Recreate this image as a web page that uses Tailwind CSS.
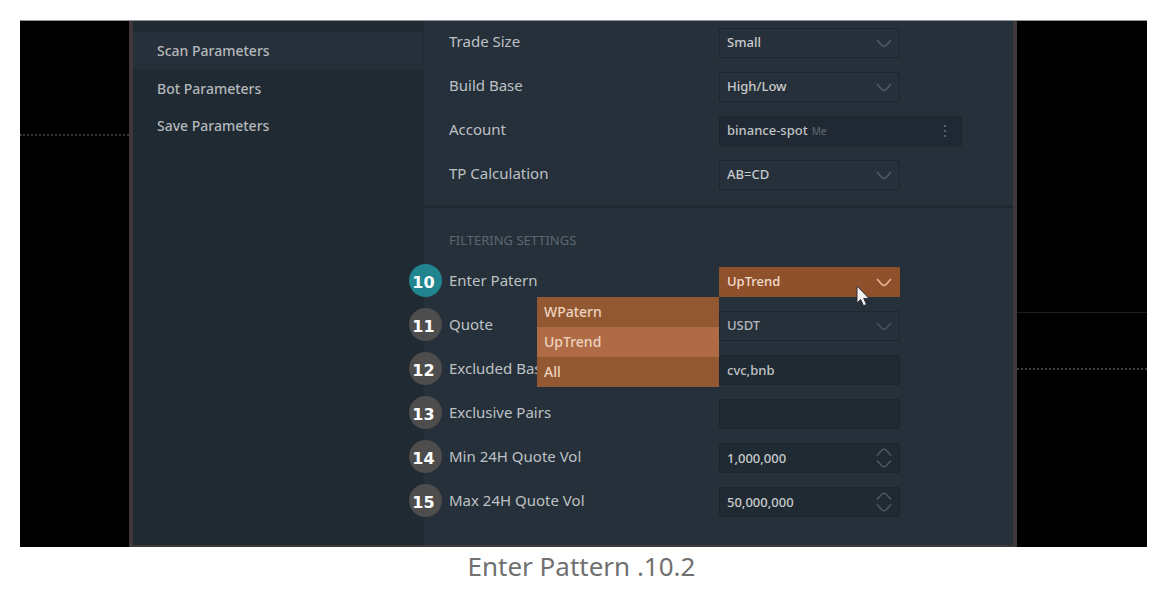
<!DOCTYPE html>
<html lang="en">
<head>
<meta charset="utf-8">
<title>Enter Pattern</title>
<script src="https://cdn.jsdelivr.net/npm/@tailwindcss/browser@4"></script>
</head>
<body class="bg-white font-['Noto_Sans',sans-serif] text-[13px] font-medium text-[#b4b8bb]">
<svg class="hidden" aria-hidden="true">
  <symbol id="chevron" viewBox="0 0 16 9"><path d="M1 1 L5.5 6 Q8 8.6 10.5 6 L15 1" fill="none" stroke="currentColor" stroke-width="1.7"/></symbol>
  <symbol id="spin" viewBox="0 0 16 20"><path d="M1 7.5 L5.5 2.5 Q8 0 10.5 2.5 L15 7.5 M1 12.5 L5.5 17.5 Q8 20 10.5 17.5 L15 12.5" fill="none" stroke="currentColor" stroke-width="1.5"/></symbol>
</svg>
<figure class="mt-5 mr-[22px] ml-5">
  <div class="flex border-t border-[#8d9599] bg-black">
    <div class="w-[109px] shrink-0 pt-[113px]"><div class="border-t-2 border-dotted border-[#343434]"></div></div>

    <div class="flex min-w-0 flex-1 border-x-4 border-b-2 border-[#40383a] bg-[#202a33]">
      <nav class="w-[290px] shrink-0 pt-[11px] text-sm" aria-label="Sections">
        <a href="#scan" class="flex h-[38px] items-center bg-[#26303a] pl-6">Scan Parameters</a>
        <a href="#bot" class="flex h-[37px] items-center pl-6">Bot Parameters</a>
        <a href="#save" class="flex h-[38px] items-center pl-6">Save Parameters</a>
      </nav>

      <form class="min-w-0 flex-1 border-l border-[#222c36] bg-[#26303a]">
        <section class="flex flex-col gap-[14px] border-b-3 border-[#1e2831] pt-[7px] pb-[15px] pl-[25px]">
          <div class="flex h-[30px] items-center">
            <label for="size" class="w-[270px] shrink-0 pb-1 text-[15px] font-normal text-[#bec1c4]">Trade Size</label>
            <div class="relative h-[30px] w-[181px]">
              <select id="size" class="h-full w-full appearance-none rounded-xs border border-[#1c2630] bg-[#26303a] pl-[7px] text-[#c9cacc]"><option>Small</option></select>
              <svg class="pointer-events-none absolute top-[11px] right-2 h-[9px] w-4 text-[#4a5a68]"><use href="#chevron"/></svg>
            </div>
          </div>
          <div class="flex h-[30px] items-center">
            <label for="base" class="w-[270px] shrink-0 pb-1 text-[15px] font-normal text-[#bec1c4]">Build Base</label>
            <div class="relative h-[30px] w-[181px]">
              <select id="base" class="h-full w-full appearance-none rounded-xs border border-[#1c2630] bg-[#26303a] pl-[7px] text-[#c9cacc]"><option>High/Low</option></select>
              <svg class="pointer-events-none absolute top-[11px] right-2 h-[9px] w-4 text-[#4a5a68]"><use href="#chevron"/></svg>
            </div>
          </div>
          <div class="flex h-[30px] items-center">
            <span class="w-[270px] shrink-0 pb-1 text-[15px] font-normal text-[#bec1c4]">Account</span>
            <div class="flex h-[30px] w-[243px] items-center rounded-xs border border-[#1b252e] bg-[#202933] pr-3 pl-[7px] text-[#c0c3c6]">
              <span>binance-spot</span><span class="ml-1 flex-1 text-[10px] text-[#59626b]">Me</span>
              <button type="button" aria-label="Account options" class="flex w-2 justify-center text-[#56626e]">
                <svg class="h-3 w-[2px]" viewBox="0 0 2 12" fill="currentColor"><path d="M0 0h2v2H0zM0 5h2v2H0zM0 10h2v2H0z"/></svg>
              </button>
            </div>
          </div>
          <div class="flex h-[30px] items-center">
            <label for="tp" class="w-[270px] shrink-0 pb-1 text-[15px] font-normal text-[#bec1c4]">TP Calculation</label>
            <div class="relative h-[30px] w-[181px]">
              <select id="tp" class="h-full w-full appearance-none rounded-xs border border-[#1c2630] bg-[#26303a] pl-[7px] text-[#c9cacc]"><option>AB=CD</option></select>
              <svg class="pointer-events-none absolute top-[11px] right-2 h-[9px] w-4 text-[#4a5a68]"><use href="#chevron"/></svg>
            </div>
          </div>
        </section>

        <section class="flex flex-col gap-[14px] pt-[22px] pb-[28px] pl-[25px]">
          <h2 class="h-[23px] text-[13px] leading-5 font-normal text-[#5c6771]">FILTERING SETTINGS</h2>
          <div class="relative flex h-[30px] items-center">
            <span class="absolute -top-[3px] -left-10 flex size-[33px] items-center justify-center rounded-full bg-[#20858f] pt-1 pr-1 font-['DejaVu_Sans',sans-serif] text-base font-bold text-white">10</span>
            <label for="pattern" class="w-[270px] shrink-0 pb-1 text-[15px] font-normal text-[#bec1c4]">Enter Patern</label>
            <div class="relative h-[30px] w-[181px]">
              <select id="pattern" class="h-full w-full appearance-none bg-[#8e512c] pl-2 text-[#f3dccb]"><option>UpTrend</option></select>
              <svg class="pointer-events-none absolute top-[11px] right-2 h-[9px] w-4 text-[#e9b48f]"><use href="#chevron"/></svg>
              <ul role="listbox" aria-label="Patterns" class="absolute top-full right-full z-10 w-[182px] bg-[#925832] text-sm text-[#efd3bf]">
                <li role="option" class="flex h-[30px] items-center pl-[7px]">WPatern</li>
                <li role="option" aria-selected="true" class="flex h-[30px] items-center bg-[#ae6b45] pl-[7px]">UpTrend</li>
                <li role="option" class="flex h-[30px] items-center pl-[7px]">All</li>
              </ul>
              <svg class="pointer-events-none absolute top-[18px] left-[137px] h-[22px] w-[14px]" viewBox="0 0 14 22"><path d="M1 1v17l3.7-3.5 2.8 6.2 3-1.3-2.8-6H13z" fill="#f4f4f6" stroke="#35313a" stroke-width="1"/></svg>
            </div>
          </div>
          <div class="relative flex h-[30px] items-center">
            <span class="absolute -top-[3px] -left-10 flex size-[33px] items-center justify-center rounded-full bg-[#4d4d4d] pt-1 pr-1 font-['DejaVu_Sans',sans-serif] text-base font-bold text-white">11</span>
            <label for="quote" class="w-[270px] shrink-0 pb-1 text-[15px] font-normal text-[#bec1c4]">Quote</label>
            <div class="relative h-[30px] w-[181px]">
              <select id="quote" class="h-full w-full appearance-none rounded-xs border border-[#1c2630] bg-[#26303a] pl-[7px] text-[#b4b8bb]"><option>USDT</option></select>
              <svg class="pointer-events-none absolute top-[11px] right-2 h-[9px] w-4 text-[#43515e]"><use href="#chevron"/></svg>
            </div>
          </div>
          <div class="relative flex h-[30px] items-center">
            <span class="absolute -top-[3px] -left-10 flex size-[33px] items-center justify-center rounded-full bg-[#4d4d4d] pt-1 pr-1 font-['DejaVu_Sans',sans-serif] text-base font-bold text-white">12</span>
            <label for="excluded" class="w-[270px] shrink-0 pb-1 text-[15px] font-normal text-[#bec1c4]">Excluded Bases</label>
            <input id="excluded" value="cvc,bnb" class="h-[30px] w-[181px] rounded-xs border border-[#1b252e] bg-[#202a33] pl-[7px] text-[#c0c3c6]">
          </div>
          <div class="relative flex h-[30px] items-center">
            <span class="absolute -top-[3px] -left-10 flex size-[33px] items-center justify-center rounded-full bg-[#4d4d4d] pt-1 pr-1 font-['DejaVu_Sans',sans-serif] text-base font-bold text-white">13</span>
            <label for="exclusive" class="w-[270px] shrink-0 pb-1 text-[15px] font-normal text-[#bec1c4]">Exclusive Pairs</label>
            <input id="exclusive" class="h-[30px] w-[181px] rounded-xs border border-[#1b252e] bg-[#202a33] pl-[7px] text-[#c0c3c6]">
          </div>
          <div class="relative flex h-[30px] items-center">
            <span class="absolute -top-[3px] -left-10 flex size-[33px] items-center justify-center rounded-full bg-[#4d4d4d] pt-1 pr-1 font-['DejaVu_Sans',sans-serif] text-base font-bold text-white">14</span>
            <label for="min" class="w-[270px] shrink-0 pb-1 text-[15px] font-normal text-[#bec1c4]">Min 24H Quote Vol</label>
            <div class="relative h-[30px] w-[181px]">
              <input id="min" inputmode="numeric" value="1,000,000" class="h-full w-full rounded-xs border border-[#1b252e] bg-[#202a33] pl-[7px] text-[#c9cacc]">
              <svg class="pointer-events-none absolute top-[5px] right-2 h-5 w-4 text-[#4a5a68]"><use href="#spin"/></svg>
            </div>
          </div>
          <div class="relative flex h-[30px] items-center">
            <span class="absolute -top-[3px] -left-10 flex size-[33px] items-center justify-center rounded-full bg-[#4d4d4d] pt-1 pr-1 font-['DejaVu_Sans',sans-serif] text-base font-bold text-white">15</span>
            <label for="max" class="w-[270px] shrink-0 pb-1 text-[15px] font-normal text-[#bec1c4]">Max 24H Quote Vol</label>
            <div class="relative h-[30px] w-[181px]">
              <input id="max" inputmode="numeric" value="50,000,000" class="h-full w-full rounded-xs border border-[#1b252e] bg-[#202a33] pl-[7px] text-[#c9cacc]">
              <svg class="pointer-events-none absolute top-[5px] right-2 h-5 w-4 text-[#4a5a68]"><use href="#spin"/></svg>
            </div>
          </div>
        </section>
      </form>
    </div>

    <div class="flex w-[130px] shrink-0 flex-col gap-[55px] pt-[291px]">
      <div class="border-t border-[#211b1b]"></div>
      <div class="border-t-2 border-dotted border-[#3c3c3c]"></div>
    </div>
  </div>
  <figcaption class="pt-1 pr-1 text-center text-[26px] leading-[30px] font-normal text-[#707070]">Enter Pattern .10.2</figcaption>
</figure>
</body>
</html>
